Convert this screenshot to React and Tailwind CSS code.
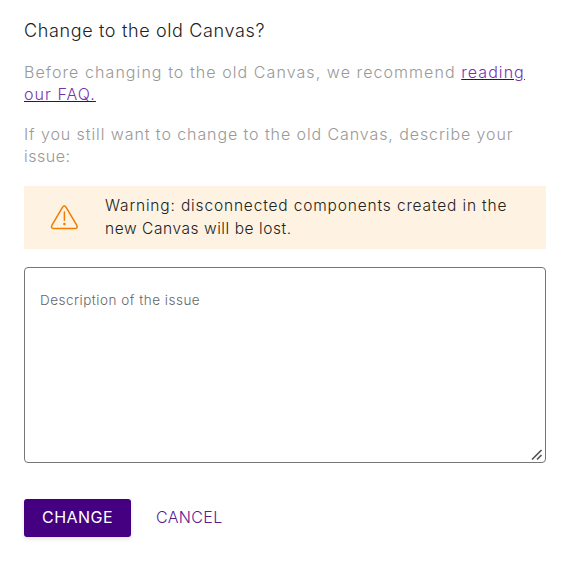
function WarningIcon() {
  return (
    <svg className="h-7 w-7 shrink-0" viewBox="0 0 28 28" fill="none" stroke="#f07d00" strokeWidth="1.5" strokeLinecap="round" strokeLinejoin="round">
      <path d="M12.6 3.1 Q14.3 1 16 3.1 L26.7 21.2 Q28.2 24.6 24.8 24.6 H3.9 Q0.5 24.6 2 21.2 Z" />
      <path d="M14.4 8 V16.2" />
      <circle cx="14.4" cy="20" r="1.3" fill="#f07d00" stroke="none" />
    </svg>
  );
}

export default function App() {
  return (
    <main className="flex h-[562px] w-[568px] flex-col bg-white px-6 pt-[18px] pr-[22px] font-['Inter',sans-serif] font-light">
      <h1 className="text-[18px] leading-[26px] font-light tracking-[0.64px] whitespace-nowrap text-[#222]">Change to the old Canvas?</h1>
      <p className="mt-[17px] text-[16px] leading-[22px] tracking-[1.07px] whitespace-nowrap text-[#999]">
        Before changing to the old Canvas, we recommend{" "}
        <a href="#faq" className="text-[#7434ae] underline decoration-[#440080]">reading<br />our FAQ.</a>
      </p>
      <p className="mt-[18px] text-[16px] leading-[22px] tracking-[0.91px] whitespace-nowrap text-[#999]">
        If you still want to change to the old Canvas, describe your<br /><span className="tracking-[0.5px]">issue:</span>
      </p>
      <div className="mt-[19px] flex h-[63px] shrink-0 items-center bg-[#fef3e2] pl-[26px]">
        <WarningIcon />
        <p className="mb-0.5 ml-[27px] text-[15.5px] leading-[23px] tracking-[0.84px] whitespace-nowrap text-[#222]">
          Warning: disconnected components created in the<br /><span className="tracking-[0.56px]">new Canvas will be lost.</span>
        </p>
      </div>
      <div className="relative mt-[18px] h-[196px] shrink-0">
        <textarea
          className="block h-full w-full resize-none rounded-[4px] border border-[#767676] bg-white px-[15px] pt-[23px] text-[13.5px] leading-[18px] font-light tracking-[0.5px] placeholder:text-[#666]"
          placeholder="Description of the issue"
        />
        <svg className="pointer-events-none absolute right-[3px] bottom-[2px] h-3 w-3" viewBox="0 0 12 12" stroke="#555" strokeWidth="1.7">
          <path d="M1 10.5 L10.5 1 M6 10.5 L10.5 6" />
        </svg>
      </div>
      <div className="mt-9 flex items-center">
        <button className="h-[38px] w-[107px] rounded-[3px] bg-[#440080] pb-0.5 text-[16px] font-normal tracking-[0.45px] text-white shadow-[0_2px_4px_rgba(0,0,0,0.12)]">CHANGE</button>
        <button className="ml-[25px] pb-0.5 text-[16px] font-light tracking-[0.35px] text-[#5a1c93]">CANCEL</button>
      </div>
    </main>
  );
}
